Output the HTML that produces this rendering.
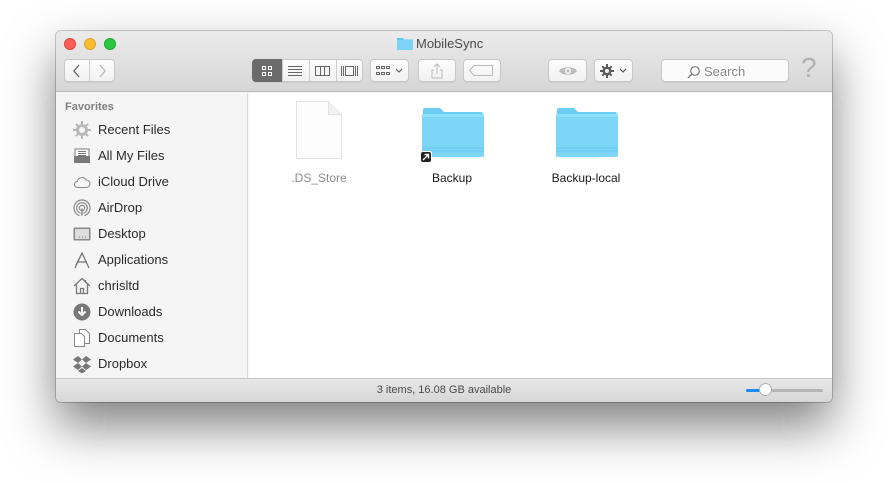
<!DOCTYPE html>
<html><head><meta charset="utf-8">
<style>
*{margin:0;padding:0;box-sizing:border-box}
body{width:888px;height:482px;background:#fff;font-family:"Liberation Sans",sans-serif;position:relative;overflow:hidden}
.win{position:absolute;left:56px;top:31px;width:776px;height:371px;border-radius:5px;background:#f6f6f6;box-shadow:0 24px 50px rgba(0,0,0,0.5),0 0 0 1px rgba(0,0,0,0.2);overflow:hidden}
.tb{position:absolute;left:0;top:0;width:776px;height:61px;background:linear-gradient(#ebebeb,#d6d6d6);border-bottom:1px solid #b9b9b9}
.dot{position:absolute;top:7px;width:12px;height:12px;border-radius:50%}
.title{position:absolute;left:360px;top:5px;font-size:13px;color:#4a4a4a}
.btn{position:absolute;top:28px;height:23px;background:linear-gradient(#fdfdfd,#f1f1f1);border:1px solid #c8c8c8;border-radius:4px;box-shadow:0 1px 0 rgba(0,0,0,0.05)}
.side{position:absolute;left:0;top:62px;width:192px;height:285px;background:#f5f5f5;border-right:1px solid #d8d8d8}
.fav{position:absolute;left:9px;top:8px;font-size:11px;color:#808080;font-weight:bold}
.it{position:absolute;left:42px;font-size:13px;color:#2a2a2a}
.ic{position:absolute;left:17px;width:18px;height:18px}
.main{position:absolute;left:193px;top:62px;width:583px;height:285px;background:#fff}
.status{position:absolute;left:0;top:347px;width:776px;height:24px;background:linear-gradient(#e9e8e9,#d7d6d7);border-top:1px solid #c6c6c6;font-size:11px;color:#4a4a4a;text-align:center;line-height:23px}
.lbl{position:absolute;font-size:12px;color:#1a1a1a;text-align:center;width:120px}
</style></head><body>
<div class="win">
 <div class="tb">
  <div class="dot" style="left:8px;background:#fc5f57;border:1px solid #e0443e"></div>
  <div class="dot" style="left:28px;background:#fdbc2e;border:1px solid #dea123"></div>
  <div class="dot" style="left:48px;background:#28c840;border:1px solid #1aab29"></div>
  <svg style="position:absolute;left:341px;top:5px" width="16" height="14"><path d="M0 2h6l1 1.5h9v10.5h-16z" fill="#63c6f0"/><rect x="0" y="4" width="16" height="10" fill="#7dd3f7"/></svg>
  <div class="title">MobileSync</div>
  <div class="btn" style="left:8px;width:51px"></div>
  <div style="position:absolute;left:33px;top:29px;width:1px;height:21px;background:#cfcfcf"></div>
  <svg style="position:absolute;left:14px;top:33px" width="40" height="14"><path d="M9 1l-5 6 5 6" stroke="#666" stroke-width="1.3" fill="none"/><path d="M30 1l5 6-5 6" stroke="#bbb" stroke-width="1.3" fill="none"/></svg>
  <div class="btn" style="left:196px;width:111px"></div>
  <div style="position:absolute;left:196px;top:28px;width:30px;height:23px;background:#6b6b6b;border-radius:4px 0 0 4px"></div>
  <svg style="position:absolute;left:196px;top:28px" width="111" height="23">
   <g fill="none" stroke="#fff" stroke-width="1"><rect x="10.5" y="7.5" width="3" height="3"/><rect x="16.5" y="7.5" width="3" height="3"/><rect x="10.5" y="13.5" width="3" height="3"/><rect x="16.5" y="13.5" width="3" height="3"/></g>
   <g stroke="#666" fill="none"><path d="M30.5 0v23M57.5 0v23M84.5 0v23" stroke="#ccc"/><path d="M36 7.5h14M36 10.5h14M36 13.5h14M36 16.5h14"/><rect x="63.5" y="7.5" width="14" height="9"/><path d="M68.5 7.5v9M72.5 7.5v9"/><rect x="93.5" y="7.5" width="8" height="9"/><path d="M89.5 7v10M91.5 7v10M103.5 7v10M105.5 7v10"/></g>
  </svg>
  <div class="btn" style="left:314px;width:39px"></div>
  <svg style="position:absolute;left:320px;top:35px" width="30" height="10"><g fill="none" stroke="#666"><rect x="0.5" y="0.5" width="3" height="2"/><rect x="5.5" y="0.5" width="3" height="2"/><rect x="10.5" y="0.5" width="3" height="2"/><rect x="0.5" y="6.5" width="3" height="2"/><rect x="5.5" y="6.5" width="3" height="2"/><rect x="10.5" y="6.5" width="3" height="2"/><path d="M20 3l3 3 3-3" stroke-width="1.2"/></g></svg>
  <div class="btn" style="left:362px;width:38px"></div>
  <svg style="position:absolute;left:373px;top:31px" width="16" height="18"><path d="M8 2v10M5 5l3-3 3 3M5 8H3v8h10V8h-2" stroke="#bbb" fill="none"/></svg>
  <div class="btn" style="left:407px;width:38px"></div>
  <svg style="position:absolute;left:413px;top:34px" width="26" height="12"><path d="M5 .5h18.5v10H5L.5 5.5z" stroke="#bbb" fill="none"/></svg>
  <div class="btn" style="left:492px;width:39px"></div>
  <svg style="position:absolute;left:502px;top:33px" width="20" height="14"><path d="M1 7C4 2 16 2 19 7C16 12 4 12 1 7z" fill="#bcbcbc"/><circle cx="10" cy="7" r="3" fill="#fff"/><circle cx="10" cy="7" r="1.6" fill="#bcbcbc"/></svg>
  <div class="btn" style="left:538px;width:39px"></div>
  <svg style="position:absolute;left:544px;top:33px" width="30" height="14"><g fill="#5a5a5a"><circle cx="7" cy="7" r="4.5"/><path d="M6 0h2v14H6zM0 6h14v2H0z"/><path d="M1.6 3l1.4-1.4 9.4 9.4-1.4 1.4zM11 1.6l1.4 1.4-9.4 9.4-1.4-1.4z"/></g><circle cx="7" cy="7" r="2" fill="#f3f3f3"/><path d="M20 5l3 3 3-3" stroke="#555" stroke-width="1.2" fill="none"/></svg>
  <div class="btn" style="left:605px;width:128px;background:#fbfbfb"></div>
  <svg style="position:absolute;left:631px;top:34px" width="14" height="14"><circle cx="8" cy="6" r="4.3" stroke="#777" stroke-width="1.2" fill="none"/><path d="M5 9L1 13" stroke="#777" stroke-width="1.4"/></svg>
  <div style="position:absolute;left:648px;top:33px;font-size:13px;color:#8a8a8a">Search</div>
  <div style="position:absolute;left:745px;top:21px;font-size:28px;color:#b0b0b0">?</div>
 </div>
 <div class="side">
  <div class="fav">Favorites</div>
  <svg class="ic" style="top:28px" viewBox="0 0 18 18"><g fill="#b8b8b8"><circle cx="9" cy="9" r="6"/><path d="M8 0h2v18H8zM0 8h18v2H0z" /><path d="M2.2 3.6l1.4-1.4 12.2 12.2-1.4 1.4zM14.4 2.2l1.4 1.4L3.6 15.8l-1.4-1.4z"/></g><circle cx="9" cy="9" r="3" fill="#f5f5f5"/></svg>
  <div class="it" style="top:29px">Recent Files</div>
  <svg class="ic" style="top:54px" viewBox="0 0 18 18"><path d="M2 9V2h14v7" stroke="#777" fill="#fff"/><path d="M5 4.5h8M5 6.5h8M5 8.5h8" stroke="#777"/><path d="M1 9h16v7H1z" fill="#7a7a7a"/></svg>
  <div class="it" style="top:55px">All My Files</div>
  <svg class="ic" style="top:80px" viewBox="0 0 18 18"><path d="M4.5 14.5a3 3 0 010-6 4.5 4.5 0 018.5-1.5 3.3 3.3 0 01.5 7.5z" stroke="#888" fill="none"/></svg>
  <div class="it" style="top:81px">iCloud Drive</div>
  <svg class="ic" style="top:106px" viewBox="0 0 18 18"><g stroke="#888" fill="none" stroke-width="1.2"><circle cx="9" cy="9" r="8"/><circle cx="9" cy="9" r="5.3"/><circle cx="9" cy="9" r="2.6"/></g><path d="M6 18l3-8 3 8z" fill="#f5f5f5"/><path d="M9 9.5v7" stroke="#888" stroke-width="1.5"/></svg>
  <div class="it" style="top:107px">AirDrop</div>
  <svg class="ic" style="top:132px" viewBox="0 0 18 18"><rect x="0.5" y="2.5" width="17" height="13" rx="1" fill="#888"/><rect x="2" y="4" width="14" height="10" fill="#ddd"/><path d="M6 12h1M9 12h1M12 12h1" stroke="#777"/></svg>
  <div class="it" style="top:133px">Desktop</div>
  <svg class="ic" style="top:158px" viewBox="0 0 18 18"><path d="M2 17L9 2l7 15M4 11h10M9 2l-6 12" stroke="#777" fill="none" stroke-width="1.3"/></svg>
  <div class="it" style="top:159px">Applications</div>
  <svg class="ic" style="top:184px" viewBox="0 0 18 18"><path d="M1 9L9 1.5 17 9M3.5 7v9.5h11V7M7.5 16.5v-5h3v5M12.5 3v3" stroke="#777" fill="none" stroke-width="1.3"/></svg>
  <div class="it" style="top:185px">chrisltd</div>
  <svg class="ic" style="top:210px" viewBox="0 0 18 18"><circle cx="9" cy="9" r="8.5" fill="#777"/><path d="M9 4v7M5.5 8.5L9 12l3.5-3.5" stroke="#fff" stroke-width="2" fill="none"/></svg>
  <div class="it" style="top:211px">Downloads</div>
  <svg class="ic" style="top:236px" viewBox="0 0 18 18"><path d="M1.5 4.5h7l3 3v10h-10zM6.5 4.5v-4h6l4 4v10h-5" stroke="#888" fill="#fff"/></svg>
  <div class="it" style="top:237px">Documents</div>
  <svg class="ic" style="top:262px" viewBox="0 0 18 18"><g fill="#777"><path d="M5 1L0 4.5 5 8l4-3.5zM13 1l5 3.5L13 8 9 4.5zM5 8L0 11.5 5 15l4-3.5zM13 8l5 3.5L13 15l-4-3.5zM5 16l4 2.5 4-2.5-4-3z"/></g></svg>
  <div class="it" style="top:263px">Dropbox</div>
 </div>
 <div class="main">
  <svg style="position:absolute;left:46px;top:7px" width="48" height="60"><path d="M1.5 1.5h32l13 13v44h-45z" fill="#fcfcfc" stroke="#e3e3e3"/><path d="M33.5 1.5v13h13" fill="#f1f1f1" stroke="#e3e3e3"/></svg>
  <div class="lbl" style="left:10px;top:78px;color:#8a8a8a">.DS_Store</div>
  <svg style="position:absolute;left:172px;top:15px" width="64" height="50"><path d="M2 2a2 2 0 012-2h15l4 4h37a2 2 0 012 2v4H2z" fill="#6cccf3"/><rect x="1" y="6" width="62" height="43" rx="2" fill="#7dd6f8"/><rect x="1" y="6" width="62" height="3" fill="#8ee0fb"/><path d="M1 40h62M1 43h62" stroke="#6ac4ec"/></svg>
  <svg style="position:absolute;left:171px;top:58px" width="12" height="12"><rect width="12" height="12" rx="2" fill="#fff"/><rect x="1" y="1" width="10" height="10" rx="2" fill="#222"/><path d="M3 9l5-5M4.5 3.5H8.5V7.5" stroke="#fff" stroke-width="1.4" fill="none"/></svg>
  <div class="lbl" style="left:143px;top:78px">Backup</div>
  <svg style="position:absolute;left:306px;top:15px" width="64" height="50"><path d="M2 2a2 2 0 012-2h15l4 4h37a2 2 0 012 2v4H2z" fill="#6cccf3"/><rect x="1" y="6" width="62" height="43" rx="2" fill="#7dd6f8"/><rect x="1" y="6" width="62" height="3" fill="#8ee0fb"/><path d="M1 40h62M1 43h62" stroke="#6ac4ec"/></svg>
  <div class="lbl" style="left:277px;top:78px">Backup-local</div>
 </div>
 <div class="status">3 items, 16.08 GB available
  <div style="position:absolute;left:690px;top:10px;width:77px;height:3px;background:#b5b5b5;border-radius:2px"></div>
  <div style="position:absolute;left:690px;top:10px;width:14px;height:3px;background:#1a8cff;border-radius:2px"></div>
  <div style="position:absolute;left:703px;top:4px;width:13px;height:13px;border-radius:50%;background:#fff;border:1px solid #b0b0b0"></div>
 </div>
</div>
</body></html>
